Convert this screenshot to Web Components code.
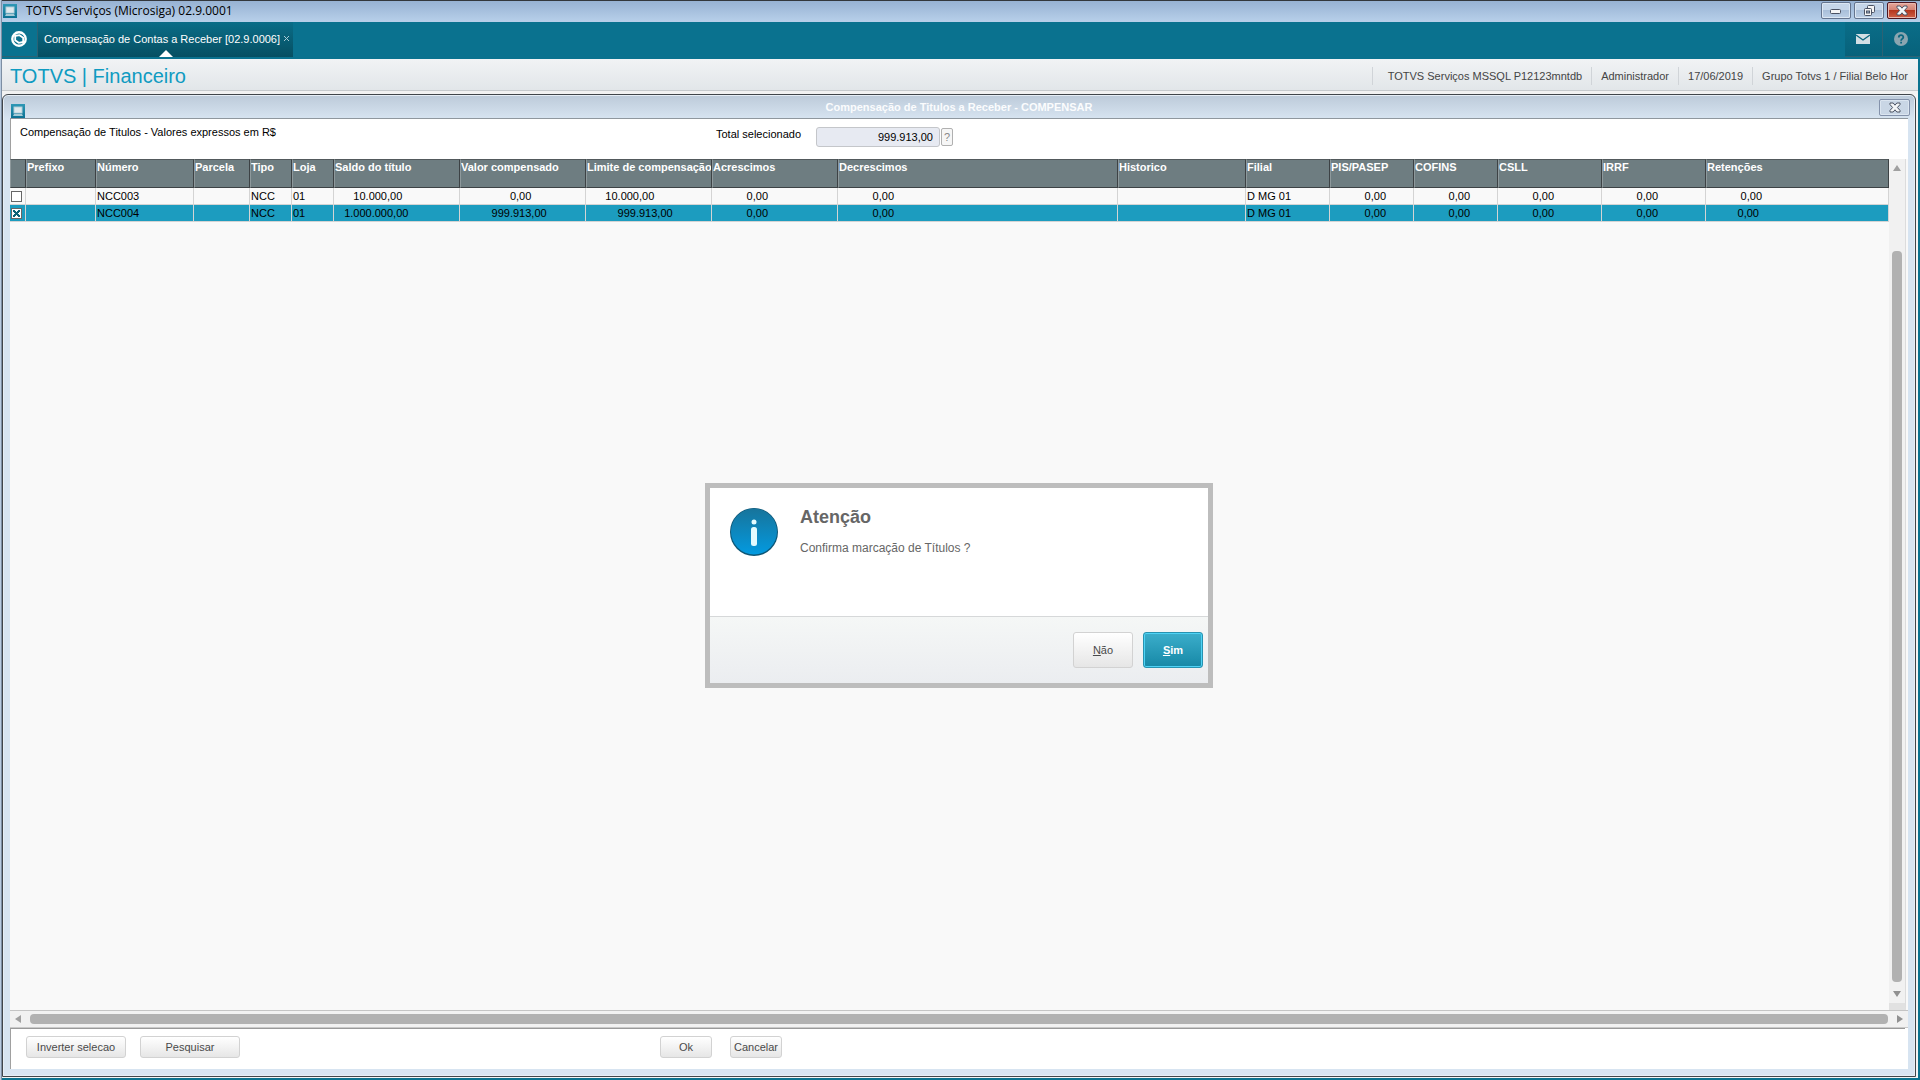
<!DOCTYPE html>
<html lang="pt-BR">
<head>
<meta charset="utf-8">
<title>TOTVS Serviços (Microsiga) 02.9.0001</title>
<style>
    html, body {
        height: 100%;
        margin: 0;
        overflow: hidden;
    }
    body {
        font: 11px/14px "Liberation Sans", Arial, sans-serif;
        color: #000;
        background: #0a728f;
    }
</style>
</head>
<body>
<app-window caption="TOTVS Serviços (Microsiga) 02.9.0001">
    <app-menu slot="menu" tab="Compensação de Contas a Receber [02.9.0006]"></app-menu>
    <app-status slot="status" heading="TOTVS | Financeiro">
        <span>TOTVS Serviços MSSQL P12123mntdb</span>
        <span>Administrador</span>
        <span>17/06/2019</span>
        <span>Grupo Totvs 1 / Filial Belo Hor</span>
    </app-status>
    <inner-window caption="Compensação de Titulos a Receber - COMPENSAR">
        <total-bar slot="top" caption="Compensação de Titulos - Valores expressos em R$" label="Total selecionado" value="999.913,00"></total-bar>
        <title-grid></title-grid>
        <app-button slot="actions">Inverter selecao</app-button>
        <app-button slot="actions">Pesquisar</app-button>
        <app-button slot="confirm">Ok</app-button>
        <app-button slot="confirm">Cancelar</app-button>
        <message-dialog slot="dialog" heading="Atenção">
            Confirma marcação de Títulos ?
            <app-button slot="buttons" size="large"><u>N</u>ão</app-button>
            <app-button slot="buttons" size="large" primary><u>S</u>im</app-button>
        </message-dialog>
    </inner-window>
</app-window>

<script>
    // Base class: puts render() in an open shadow root
    class BaseElement extends HTMLElement {
        constructor() {
            super();
            this._root = this.attachShadow({mode: 'open'});
            this._root.innerHTML = `<style>* { box-sizing: border-box; }</style>` + this.render();
        }

        attr(name) {
            return this.getAttribute(name) || '';
        }
    }

    const closeGlyph = `
        <svg width="12" height="11" viewBox="0 0 12 11">
            <path d="M1 1h3.2L6 3.2 7.8 1H11v1.6L8.4 5.5 11 8.4V10H7.8L6 7.8 4.2 10H1V8.4l2.6-2.9L1 2.6z" fill="#f4f6f8" stroke="#4b5263"/>
        </svg>`;

    class AppLogo extends BaseElement {
        render() {
            return `
            <style>
                :host { display: block; width: 14px; height: 14px; }
                svg { display: block; }
            </style>
            <svg width="14" height="14" viewBox="0 0 14 14">
                <defs>
                    <linearGradient id="bg" x1="0" y1="0" x2="0" y2="1">
                        <stop offset="0" stop-color="#2f98b6"/>
                        <stop offset="1" stop-color="#0c7193"/>
                    </linearGradient>
                </defs>
                <rect width="14" height="14" fill="url(#bg)"/>
                <rect x="3" y="3" width="8" height="6" fill="#dfe8ec" stroke="#b4d0da"/>
                <path d="M3 10h8l1 2H2z" fill="#a5cad6"/>
            </svg>`;
        }
    }

    class AppWindow extends BaseElement {
        render() {
            return `
            <style>
                :host {
                    display: flex;
                    flex-direction: column;
                    height: 100vh;
                    padding-left: 2px;
                    background: linear-gradient(to right, #b9cbe0 1px, #7d8ea3 1px, #7d8ea3 2px, transparent 2px);
                }
                header {
                    display: flex;
                    align-items: center;
                    height: 22px;
                    padding: 0 3px 2px 1px;
                    border-top: 1px solid #33373c;
                    background: linear-gradient(#97b2d3, #b8d0ea);
                    flex: none;
                }
                h1 {
                    flex: 1;
                    margin: 0 0 0 9px;
                    font: 12px/18px "Open Sans", "Segoe UI", sans-serif;
                }
                .controls { display: flex; gap: 3px; }
                button {
                    display: flex;
                    align-items: center;
                    justify-content: center;
                    width: 30px;
                    height: 17px;
                    padding: 0;
                    border: 1px solid #64748e;
                    border-radius: 2px;
                    background: linear-gradient(#c6d6e9 50%, #a9bfd9 50%, #bdd0e6);
                    box-shadow: inset 0 0 0 1px #dce7f3;
                }
                .close {
                    border-color: #4c1620;
                    background: linear-gradient(#e6a79b, #d27f70 50%, #b5371f 50%, #cf6148);
                    box-shadow: inset 0 0 0 1px #e9b9af;
                }
            </style>
            <header>
                <app-logo></app-logo>
                <h1>${this.attr('caption')}</h1>
                <div class="controls">
                    <button aria-label="Minimizar">
                        <svg width="12" height="6" viewBox="0 0 12 6"><rect x=".5" y="1.5" width="10" height="4" rx="1" fill="#f5f5f5" stroke="#4b5263"/></svg>
                    </button>
                    <button aria-label="Restaurar">
                        <svg width="13" height="12" viewBox="0 0 13 12" fill="#f5f5f5" stroke="#4b5263">
                            <rect x="4.5" y=".5" width="7" height="7" rx="1"/>
                            <rect x="1.5" y="3.5" width="7" height="7" rx="1"/>
                            <rect x="3.5" y="6" width="3" height="2" fill="#9db2cd"/>
                        </svg>
                    </button>
                    <button class="close" aria-label="Fechar">${closeGlyph}</button>
                </div>
            </header>
            <slot name="menu"></slot>
            <slot name="status"></slot>
            <slot></slot>`;
        }
    }

    class AppMenu extends BaseElement {
        render() {
            return `
            <style>
                :host {
                    display: flex;
                    height: 37px;
                    padding-bottom: 2px;
                    box-sizing: border-box;
                    background: #0a728f;
                    flex: none;
                }
                button { border: 0; padding: 0; background: none; }
                svg { display: block; margin: auto; }
                .home {
                    width: 36px;
                    padding-right: 2px;
                    border-right: 1px solid #2c6274;
                    border-bottom: 1px solid #2c6274;
                }
                .tab {
                    display: flex;
                    align-items: center;
                    gap: 3px;
                    position: relative;
                    padding: 0 3px 2px 6px;
                    background: linear-gradient(#0a6d88, #064f62);
                }
                .tab a {
                    color: #fff;
                    text-decoration: none;
                    white-space: nowrap;
                }
                .tab::after {
                    content: "";
                    position: absolute;
                    left: 50%;
                    bottom: 0;
                    margin-left: -7px;
                    border: 7px solid transparent;
                    border-top: 0;
                    border-bottom-color: #fff;
                }
                .tools { display: flex; gap: 1px; margin-left: auto; background: #2c6274; }
                .tools button {
                    width: 37px;
                    padding-right: 2px;
                    background: linear-gradient(#0a6d88, #07627b);
                    border-bottom: 1px solid #2c6274;
                }
            </style>
            <button class="home" aria-label="Início">
                <svg width="16" height="16" viewBox="0 0 16 16" fill="none" stroke="#fff">
                    <circle cx="8" cy="8" r="6.7" stroke-width="2.4"/>
                    <path d="M3.5 5l5-.8 3.700 2.600v5" stroke-width="1.800"/>
                    <path d="M4.200 4.500v4.800l3.500 2.500 4.800-.8" stroke-width="1.800"/>
                </svg>
            </button>
            <div class="tab">
                <a href="#">${this.attr('tab')}</a>
                <button aria-label="Fechar aba">
                    <svg width="7" height="7" viewBox="0 0 7 7"><path d="M1 1l5 5M6 1L1 6" stroke="#a9cbd5"/></svg>
                </button>
            </div>
            <div class="tools">
                <button aria-label="Mensagens">
                    <svg width="14" height="10" viewBox="0 0 14 10">
                        <rect width="14" height="10" fill="#d3dfe4"/>
                        <path d="M0 1l7 5 7-5" fill="none" stroke="#0a667f" stroke-width="1.4"/>
                    </svg>
                </button>
                <button aria-label="Ajuda">
                    <svg width="14" height="14" viewBox="0 0 14 14">
                        <circle cx="7" cy="7" r="7" fill="#8aa5b0"/>
                        <path d="M4.8 5.4C4.8 2.4 9.3 2.5 9.3 5.2 9.3 6.9 7.1 6.9 7.1 8.7M7.1 9.8v1.8" fill="none" stroke="#0a667f" stroke-width="1.8"/>
                    </svg>
                </button>
            </div>`;
        }
    }

    class AppStatus extends BaseElement {
        render() {
            return `
            <style>
                :host {
                    display: flex;
                    align-items: center;
                    height: 35px;
                    margin-right: 2px;
                    padding: 0 1px 2px 8px;
                    box-sizing: border-box;
                    background: linear-gradient(#f1f3f5, #e2e6e9 31px, #c6cacd 31px, #c6cacd 32px, #f2f2f2 32px);
                    color: #444;
                    flex: none;
                }
                h2 {
                    flex: 1;
                    margin: 0;
                    font-size: 20px;
                    font-weight: normal;
                    line-height: 32px;
                    color: #0f9bc1;
                }
                ::slotted(span) {
                    padding: 2px 9px;
                    border-left: 1px solid #d0d4d8;
                    white-space: nowrap;
                }
                ::slotted(span:first-of-type) { padding-left: 15px; }
            </style>
            <h2>${this.attr('heading')}</h2>
            <slot></slot>`;
        }
    }

    class InnerWindow extends BaseElement {
        render() {
            return `
            <style>
                :host {
                    display: flex;
                    flex: 1;
                    min-height: 0;
                    margin-right: 2px;
                    margin-bottom: 2px;
                    padding: 0 2px 1px 0;
                    background: #f4f4f4;
                    position: relative;
                }
                .frame {
                    display: flex;
                    flex-direction: column;
                    flex: 1;
                    min-width: 0;
                    padding: 0 7px;
                    padding-bottom: 7px;
                    border: 1px solid #41464b;
                    border-radius: 6px 6px 0 0;
                    background: linear-gradient(#bccad9, #d7e4f1 24px);
                    box-shadow: inset 0 0 0 1px #e6eef6;
                }
                header {
                    display: flex;
                    align-items: center;
                    height: 24px;
                    padding: 1px 0 0 1px;
                    border-bottom: 1px solid #8f979e;
                }
                app-logo { margin-top: 8px; }
                h2 {
                    flex: 1;
                    margin: 0 0 0 14px;
                    font-size: 11px;
                    line-height: 22px;
                    text-align: center;
                    color: #fbfcfd;
                }
                header button {
                    display: flex;
                    align-items: center;
                    justify-content: center;
                    width: 31px;
                    height: 17px;
                    margin-right: -2px;
                    padding: 0;
                    border: 1px solid #8492ab;
                    border-radius: 2px;
                    background: #c9d6e5;
                    box-shadow: inset 0 0 0 1px #dbe5f0;
                }
                .content {
                    display: flex;
                    flex-direction: column;
                    flex: 1;
                    min-height: 0;
                    background: #fff;
                }
                footer {
                    display: flex;
                    gap: 420px;
                    height: 41px;
                    margin-right: 3px;
                    padding: 7px 15px;
                    border-top: 1px solid #999;
                    border-left: 1px solid #a0a0a0;
                }
                .group { display: flex; gap: 14px; }
                .group + .group { gap: 18px; }
                .group:first-child ::slotted(*) { width: 100px; }
                .group:last-child ::slotted(*) { width: 52px; }
                .overlay {
                    position: absolute;
                    inset: 0 2px 2px 0;
                    display: grid;
                    place-items: center;
                }
            </style>
            <section class="frame">
                <header>
                    <app-logo></app-logo>
                    <h2>${this.attr('caption')}</h2>
                    <button aria-label="Fechar">${closeGlyph}</button>
                </header>
                <div class="content">
                    <slot name="top"></slot>
                    <slot></slot>
                    <footer>
                        <div class="group"><slot name="actions"></slot></div>
                        <div class="group"><slot name="confirm"></slot></div>
                    </footer>
                </div>
            </section>
            <div class="overlay"><slot name="dialog"></slot></div>`;
        }
    }

    class TotalBar extends BaseElement {
        render() {
            return `
            <style>
                :host {
                    display: grid;
                    grid-template-columns: 696px 100px 124px auto;
                    align-items: start;
                    height: 40px;
                    padding: 6px 0 0 9px;
                    box-sizing: border-box;
                    border-left: 1px solid #a0a0a0;
                    flex: none;
                }
                label { padding-top: 2px; }
                input {
                    width: 124px;
                    height: 20px;
                    margin-top: 2px;
                    padding: 0 6px;
                    border: 1px solid #c4c6ca;
                    border-radius: 3px;
                    background: #e7eaf2;
                    font: inherit;
                    text-align: right;
                }
                button {
                    width: 12px;
                    height: 18px;
                    margin: 3px 0 0 1px;
                    padding: 0;
                    border: 1px solid #b0b0b0;
                    border-radius: 2px;
                    background: #f6f6f6;
                    color: #888;
                    font: inherit;
                }
            </style>
            <span>${this.attr('caption')}</span>
            <label for="total">${this.attr('label')}</label>
            <input id="total" readonly value="${this.attr('value')}">
            <button>?</button>`;
        }
    }

    // column title and width; the last one takes the rest
    const columns = [
        ['Prefixo', 70], ['Número', 98], ['Parcela', 56], ['Tipo', 42], ['Loja', 42],
        ['Saldo do título', 126], ['Valor compensado', 126], ['Limite de compensação', 126],
        ['Acrescimos', 126], ['Decrescimos', 280], ['Historico', 128], ['Filial', 84],
        ['PIS/PASEP', 84], ['COFINS', 84], ['CSLL', 104], ['IRRF', 104], ['Retenções', 0]
    ];

    // the number is how many blanks stand before the value
    const rows = [
        {marked: false, cells: ['', 'NCC003', '', 'NCC', '01', [6, '10.000,00'], [16, '0,00'], [6, '10.000,00'],
            [11, '0,00'], [11, '0,00'], '', 'D MG 01', [11, '0,00'], [11, '0,00'], [11, '0,00'], [11, '0,00'], [11, '0,00']]},
        {marked: true, cells: ['', 'NCC004', '', 'NCC', '01', [3, '1.000.000,00'], [10, '999.913,00'], [10, '999.913,00'],
            [11, '0,00'], [11, '0,00'], '', 'D MG 01', [11, '0,00'], [11, '0,00'], [11, '0,00'], [11, '0,00'], [10, '0,00']]}
    ];

    class TitleGrid extends BaseElement {
        render() {
            const cell = c => Array.isArray(c) ? '\u00a0'.repeat(c[0]) + c[1] : c;
            return `
            <style>
                :host {
                    display: grid;
                    grid-template: 1fr 18px / 1fr 19px;
                    flex: 1;
                    min-height: 0;
                    background: #f9f9f9;
                }
                table {
                    width: 100%;
                    border-collapse: separate;
                    border-spacing: 0;
                    table-layout: fixed;
                }
                th, td {
                    overflow: hidden;
                    padding: 0;
                    text-align: left;
                    white-space: nowrap;
                    border-right: 1px solid #d4d4d4;
                    border-bottom: 1px solid #d4d4d4;
                }
                th {
                    height: 29px;
                    vertical-align: top;
                    line-height: 14px;
                    color: #fff;
                    background: #6e7d81;
                    border-top: 1px solid #52595c;
                    border-right-color: #3d4245;
                    border-bottom-color: #3d4245;
                    border-left: 1px solid #8e999c;
                }
                td { height: 17px; line-height: 16px; padding-left: 1px; }
                tr.marked td { background: #1c9cbf; }
                input {
                    appearance: none;
                    display: block;
                    width: 11px;
                    height: 11px;
                    margin: 0;
                    border: 1px solid #666;
                    background: #fff;
                }
                input:checked {
                    padding: 1px;
                    background:
                        linear-gradient(45deg, transparent 42%, #0c6377 42%, #0c6377 58%, transparent 58%) content-box,
                        linear-gradient(-45deg, transparent 42%, #0c6377 42%, #0c6377 58%, transparent 58%) content-box,
                        #fff;
                }
                h-scroll { grid-column: 1 / 3; }
            </style>
            <div>
                <table>
                    <colgroup>
                        <col style="width: 16px">
                        ${columns.map(c => c[1] ? `<col style="width: ${c[1]}px">` : '<col>').join('')}
                    </colgroup>
                    <thead>
                        <tr><th></th>${columns.map(c => `<th>${c[0]}</th>`).join('')}</tr>
                    </thead>
                    <tbody>
                        ${rows.map(r => `
                        <tr class="${r.marked ? 'marked' : ''}">
                            <td><input type="checkbox" aria-label="${r.cells[1]}" ${r.marked ? 'checked' : ''}></td>
                            ${r.cells.map(c => `<td>${cell(c)}</td>`).join('')}
                        </tr>`).join('')}
                    </tbody>
                </table>
            </div>
            <v-scroll></v-scroll>
            <h-scroll></h-scroll>`;
        }
    }

    class VScroll extends BaseElement {
        render() {
            return `
            <style>
                :host {
                    display: flex;
                    flex-direction: column;
                    align-items: center;
                    margin-right: 2px;
                    border-right: 1px solid #dcdcdc;
                    border-bottom: 7px solid #e1e1e1;
                    background: #f1f1f1;
                }
                svg { flex: none; margin: 6px 0; }
                .track { flex: 1; width: 10px; padding: 74px 0 3px; }
                .thumb { height: 100%; border-radius: 4px; background: #b1b1b1; }
            </style>
            <svg width="8" height="6"><path d="M0 6l4-6 4 6z" fill="#a0a0a0"/></svg>
            <div class="track"><div class="thumb"></div></div>
            <svg width="8" height="6"><path d="M0 0l4 6 4-6z" fill="#909090"/></svg>`;
        }
    }

    class HScroll extends BaseElement {
        render() {
            return `
            <style>
                :host {
                    display: flex;
                    align-items: center;
                    box-sizing: border-box;
                    height: 18px;
                    padding: 0 5px;
                    border-top: 1px solid #c4c4c4;
                    border-bottom: 1px solid #c9c9c9;
                    background: #f1f1f1;
                }
                .thumb { flex: 1; height: 10px; margin: 0 9px; border-radius: 4px; background: #b1b1b1; }
            </style>
            <svg width="6" height="8"><path d="M6 0L0 4l6 4z" fill="#a0a0a0"/></svg>
            <div class="thumb"></div>
            <svg width="6" height="8"><path d="M0 0l6 4-6 4z" fill="#909090"/></svg>`;
        }
    }

    class AppButton extends BaseElement {
        render() {
            return `
            <style>
                :host { display: block; height: 22px; }
                :host([size="large"]) { width: 60px; height: 36px; }
                button {
                    width: 100%;
                    height: 100%;
                    padding: 0;
                    border: 1px solid #d2d2d2;
                    border-radius: 3px;
                    background: linear-gradient(#fff, #e6e6e6);
                    color: #4a4a4a;
                    font: inherit;
                    white-space: nowrap;
                }
                :host([primary]) button {
                    border-color: #2793b1;
                    background: linear-gradient(#3caecb, #1688a6);
                    box-shadow: inset 0 0 0 1px #4fd3f5;
                    color: #fff;
                    font-weight: bold;
                }
            </style>
            <button><slot></slot></button>`;
        }
    }

    class MessageDialog extends BaseElement {
        render() {
            return `
            <style>
                :host {
                    display: block;
                    width: 508px;
                    box-sizing: border-box;
                    border: 5px solid #bdbdbd;
                    background: #fff;
                    color: #666;
                }
                .body {
                    display: grid;
                    grid-template-columns: 48px 1fr;
                    gap: 22px;
                    height: 128px;
                    padding: 20px;
                }
                svg { display: block; }
                h3 {
                    margin: 0 0 13px;
                    font-size: 18px;
                    line-height: 19px;
                }
                p { margin: 0; font-size: 12px; line-height: 16px; }
                footer {
                    display: flex;
                    justify-content: flex-end;
                    gap: 10px;
                    height: 67px;
                    padding: 15px 5px;
                    border-top: 1px solid #d6d8d9;
                    background: linear-gradient(#f5f7f6, #ebedf0);
                }
            </style>
            <div role="dialog" aria-labelledby="heading">
                <div class="body">
                    <svg width="48" height="48" viewBox="0 0 48 48">
                        <defs>
                            <linearGradient id="ball" x1="0" y1="0" x2="0" y2="1">
                                <stop offset="0" stop-color="#17749b"/>
                                <stop offset="1" stop-color="#039ae0"/>
                            </linearGradient>
                        </defs>
                        <circle cx="24" cy="24" r="24" fill="#0d5676"/>
                        <circle cx="24" cy="23.5" r="23" fill="url(#ball)"/>
                        <circle cx="24" cy="14" r="2.5" fill="#e3fbff"/>
                        <rect x="21" y="19" width="6" height="19" rx="2.5" fill="#e3fbff"/>
                    </svg>
                    <div>
                        <h3 id="heading">${this.attr('heading')}</h3>
                        <p><slot></slot></p>
                    </div>
                </div>
                <footer><slot name="buttons"></slot></footer>
            </div>`;
        }
    }

    window.customElements.define('app-logo', AppLogo);
    window.customElements.define('app-button', AppButton);
    window.customElements.define('v-scroll', VScroll);
    window.customElements.define('h-scroll', HScroll);
    window.customElements.define('title-grid', TitleGrid);
    window.customElements.define('total-bar', TotalBar);
    window.customElements.define('message-dialog', MessageDialog);
    window.customElements.define('inner-window', InnerWindow);
    window.customElements.define('app-status', AppStatus);
    window.customElements.define('app-menu', AppMenu);
    window.customElements.define('app-window', AppWindow);
</script>
</body>
</html>
